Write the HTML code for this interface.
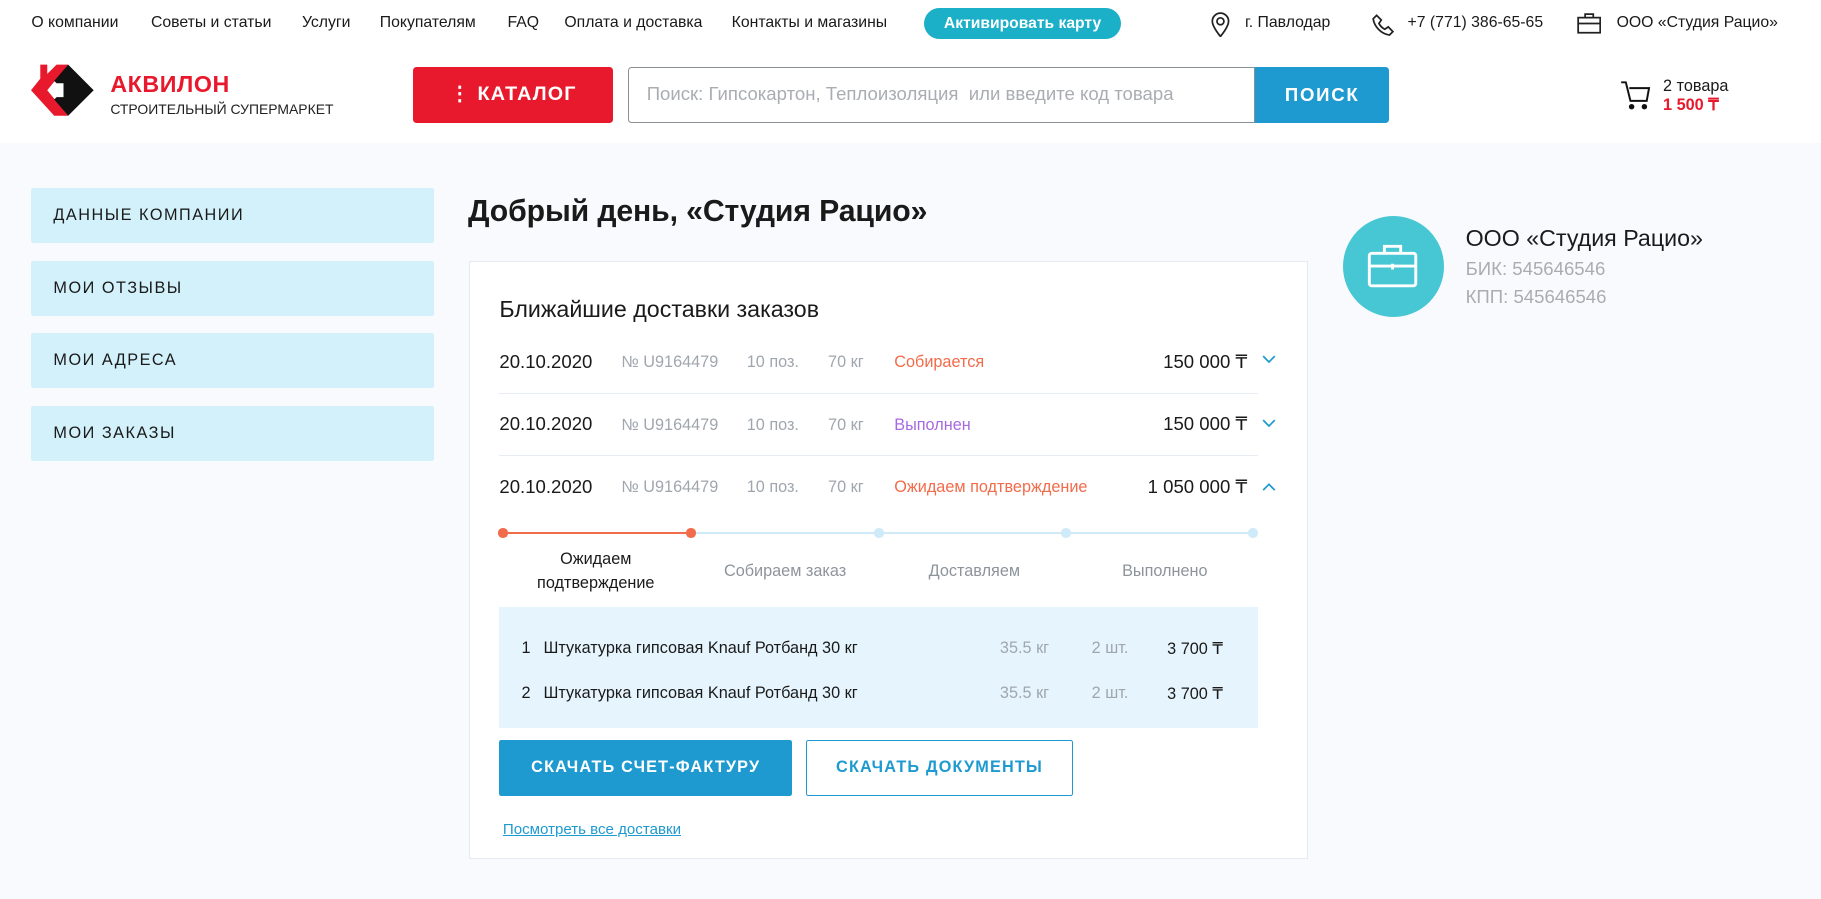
<!DOCTYPE html>
<html><head><meta charset="utf-8"><style>
html,body{margin:0;padding:0}
body{width:1821px;height:898px;overflow:hidden;background:#f8fafd;font-family:"Liberation Sans",sans-serif;color:#1a1a1a}
#w{zoom:1.16135;position:relative;width:1568px;height:774px}
.a{position:absolute;white-space:nowrap}
.hdr{position:absolute;left:0;top:0;width:1568px;height:123px;background:#fff}
.nav{font-size:13.6px;top:12px}
.side{position:absolute;left:27px;width:347px;height:47px;background:#d3f1fb;border-radius:2px;font-size:14px;letter-spacing:1.3px;line-height:47px;padding-left:19px;box-sizing:border-box}
.row{font-size:16px}
.g{color:#a0a6ad;font-size:14px}
.sep{position:absolute;left:430px;width:653px;height:1px;background:#e6ecf1}
.chev{position:absolute;left:1087px}
</style></head><body><div id="w">
<div class="hdr"></div>
<div class="a nav" style="left:27px">О компании</div>
<div class="a nav" style="left:130px">Советы и статьи</div>
<div class="a nav" style="left:260px">Услуги</div>
<div class="a nav" style="left:327px">Покупателям</div>
<div class="a nav" style="left:437px">FAQ</div>
<div class="a nav" style="left:486px">Оплата и доставка</div>
<div class="a nav" style="left:630px">Контакты и магазины</div>
<div class="a" style="left:796px;top:7px;width:169px;height:27px;border-radius:14px;background:#1bb0c8;color:#fff;font-size:13.5px;font-weight:bold;line-height:27px;text-align:center">Активировать карту</div>
<svg class="a" style="left:1042px;top:10px" width="18" height="22" viewBox="0 0 18 22" fill="none" stroke="#222" stroke-width="1.5"><path d="M9 21C9 21 2 13 2 8a7 7 0 0 1 14 0c0 5-7 13-7 13z"/><circle cx="9" cy="8" r="3"/></svg>
<div class="a nav" style="left:1072px">г. Павлодар</div>
<svg class="a" style="left:1181px;top:11px" width="20" height="20" viewBox="0 0 20 20" fill="none" stroke="#222" stroke-width="1.5"><path d="M4 2l4 4-2 3c1 2 3 4 5 5l3-2 4 4-3 3C8 18 2 12 1 5z"/></svg>
<div class="a nav" style="left:1212px">+7 (771) 386-65-65</div>
<svg class="a" style="left:1358px;top:11px" width="21" height="18" viewBox="0 0 21 18" fill="none" stroke="#222" stroke-width="1.5"><rect x="1" y="4" width="19" height="13"/><path d="M7 4V1h7v3M1 9h19"/></svg>
<div class="a nav" style="left:1392px">ООО «Студия Рацио»</div>

<svg class="a" style="left:27px;top:52px" width="60" height="50" viewBox="0 0 60 50"><path d="M8 4h6v8l8-8h10L14 26l18 22H20L0 26 8 16z" fill="#e8192c"/><path d="M32 4l22 22-22 22-12-14 8-8-8-8z" fill="#111"/><path d="M22 20h6v12h-6l4-6z" fill="#fff"/></svg>
<div class="a" style="left:95px;top:61px;font-size:20px;font-weight:bold;color:#e8192c;letter-spacing:0.5px">АКВИЛОН</div>
<div class="a" style="left:95px;top:87px;font-size:12px;color:#222">СТРОИТЕЛЬНЫЙ СУПЕРМАРКЕТ</div>
<div class="a" style="left:356px;top:58px;width:172px;height:48px;background:#e8192c;border-radius:3px;color:#fff;font-size:17px;font-weight:bold;letter-spacing:1px;line-height:48px;text-align:center">⋮ КАТАЛОГ</div>
<div class="a" style="left:541px;top:58px;width:540px;height:48px;border:1.5px solid #8a8f94;box-sizing:border-box;border-radius:3px 0 0 3px;font-size:16px;color:#a9adb2;line-height:45px;padding-left:15px">Поиск: Гипсокартон, Теплоизоляция &nbsp;или введите код товара</div>
<div class="a" style="left:1081px;top:58px;width:115px;height:48px;background:#1e9ad0;border-radius:0 3px 3px 0;color:#fff;font-size:16px;font-weight:bold;letter-spacing:1.5px;line-height:48px;text-align:center">ПОИСК</div>
<svg class="a" style="left:1395px;top:69px" width="28" height="27" viewBox="0 0 28 27" fill="none" stroke="#111" stroke-width="1.7"><path d="M1 2h4l4 16h14l2-11H8"/><circle cx="10" cy="23" r="1.5" fill="#111"/><circle cx="21" cy="23" r="1.5" fill="#111"/></svg>
<div class="a" style="left:1432px;top:66px;font-size:14px">2 товара</div>
<div class="a" style="left:1432px;top:82px;font-size:14px;font-weight:bold;color:#e8192c">1 500 ₸</div>

<div class="side" style="top:162px">ДАННЫЕ КОМПАНИИ</div>
<div class="side" style="top:225px">МОИ ОТЗЫВЫ</div>
<div class="side" style="top:287px">МОИ АДРЕСА</div>
<div class="side" style="top:350px">МОИ ЗАКАЗЫ</div>

<div class="a" style="left:403px;top:168px;font-size:26px;font-weight:bold;letter-spacing:-0.1px">Добрый день, «Студия Рацио»</div>
<div class="a" style="left:404px;top:225px;width:722px;height:515px;background:#fff;border:1px solid #e4eaf0;box-sizing:border-box"></div>
<div class="a" style="left:430px;top:255px;font-size:20px">Ближайшие доставки заказов</div>

<div class="a row" style="left:430px;top:302px">20.10.2020</div>
<div class="a g" style="left:535px;top:304px">№ U9164479</div><div class="a g" style="left:643px;top:304px">10 поз.</div><div class="a g" style="left:713px;top:304px">70 кг</div>
<div class="a" style="left:770px;top:304px;font-size:14px;color:#f26b4a">Собирается</div>
<div class="a row" style="right:494px;top:302px">150 000 ₸</div>
<svg class="chev" style="top:306px" width="12" height="8" viewBox="0 0 12 8" fill="none" stroke="#1e9ad0" stroke-width="1.5"><path d="M1 1l5 5 5-5"/></svg>
<div class="sep" style="top:338px"></div>
<div class="a row" style="left:430px;top:356px">20.10.2020</div>
<div class="a g" style="left:535px;top:358px">№ U9164479</div><div class="a g" style="left:643px;top:358px">10 поз.</div><div class="a g" style="left:713px;top:358px">70 кг</div>
<div class="a" style="left:770px;top:358px;font-size:14px;color:#a66ae0">Выполнен</div>
<div class="a row" style="right:494px;top:356px">150 000 ₸</div>
<svg class="chev" style="top:361px" width="12" height="8" viewBox="0 0 12 8" fill="none" stroke="#1e9ad0" stroke-width="1.5"><path d="M1 1l5 5 5-5"/></svg>
<div class="sep" style="top:392px"></div>
<div class="a row" style="left:430px;top:410px">20.10.2020</div>
<div class="a g" style="left:535px;top:412px">№ U9164479</div><div class="a g" style="left:643px;top:412px">10 поз.</div><div class="a g" style="left:713px;top:412px">70 кг</div>
<div class="a" style="left:770px;top:412px;font-size:14px;color:#f26b4a">Ожидаем подтверждение</div>
<div class="a row" style="right:494px;top:410px">1 050 000 ₸</div>
<svg class="chev" style="top:415px" width="12" height="8" viewBox="0 0 12 8" fill="none" stroke="#1e9ad0" stroke-width="1.5"><path d="M1 7l5-5 5 5"/></svg>

<div class="a" style="left:433px;top:458px;width:646px;height:2px;background:#cfeaf8"></div>
<div class="a" style="left:433px;top:458px;width:162px;height:2px;background:#f26b4a"></div>
<div class="a" style="left:429px;top:455px;width:8px;height:8px;border-radius:50%;background:#f26b4a"></div>
<div class="a" style="left:591px;top:455px;width:8px;height:8px;border-radius:50%;background:#f26b4a"></div>
<div class="a" style="left:753px;top:455px;width:8px;height:8px;border-radius:50%;background:#cfeaf8"></div>
<div class="a" style="left:914px;top:455px;width:8px;height:8px;border-radius:50%;background:#cfeaf8"></div>
<div class="a" style="left:1075px;top:455px;width:8px;height:8px;border-radius:50%;background:#cfeaf8"></div>
<div class="a" style="left:433px;top:471px;width:160px;text-align:center;font-size:14px;line-height:21px">Ожидаем<br>подтверждение</div>
<div class="a g" style="left:596px;top:484px;width:160px;text-align:center;color:#8d949b">Собираем заказ</div>
<div class="a g" style="left:759px;top:484px;width:160px;text-align:center;color:#8d949b">Доставляем</div>
<div class="a g" style="left:923px;top:484px;width:160px;text-align:center;color:#8d949b">Выполнено</div>

<div class="a" style="left:430px;top:523px;width:653px;height:104px;background:#e6f5fd"></div>
<div class="a" style="left:449px;top:550px;font-size:14px">1</div><div class="a" style="left:468px;top:550px;font-size:14px">Штукатурка гипсовая Knauf Ротбанд 30 кг</div>
<div class="a g" style="left:861px;top:550px">35.5 кг</div><div class="a g" style="left:940px;top:550px">2 шт.</div><div class="a" style="left:1005px;top:550px;font-size:14px">3 700 ₸</div>
<div class="a" style="left:449px;top:589px;font-size:14px">2</div><div class="a" style="left:468px;top:589px;font-size:14px">Штукатурка гипсовая Knauf Ротбанд 30 кг</div>
<div class="a g" style="left:861px;top:589px">35.5 кг</div><div class="a g" style="left:940px;top:589px">2 шт.</div><div class="a" style="left:1005px;top:589px;font-size:14px">3 700 ₸</div>

<div class="a" style="left:430px;top:637px;width:252px;height:48px;background:#1e9ad0;border-radius:2px;color:#fff;font-size:14px;font-weight:bold;letter-spacing:1px;line-height:48px;text-align:center">СКАЧАТЬ СЧЕТ-ФАКТУРУ</div>
<div class="a" style="left:694px;top:637px;width:230px;height:48px;border:1.5px solid #1e9ad0;box-sizing:border-box;border-radius:2px;color:#1e9ad0;font-size:14px;font-weight:bold;letter-spacing:1px;line-height:45px;text-align:center">СКАЧАТЬ ДОКУМЕНТЫ</div>
<div class="a" style="left:433px;top:707px;font-size:13px;color:#1e9ad0;text-decoration:underline">Посмотреть все доставки</div>

<div class="a" style="left:1156px;top:186px;width:87px;height:87px;border-radius:50%;background:#47c6d4"></div>
<svg class="a" style="left:1177px;top:210px" width="44" height="38" viewBox="0 0 44 38" fill="none" stroke="#fff" stroke-width="2.5"><rect x="2" y="8" width="40" height="28" rx="2"/><path d="M15 8V2h14v6M2 19h40M22 17v5"/></svg>
<div class="a" style="left:1262px;top:194px;font-size:20px">ООО «Студия Рацио»</div>
<div class="a" style="left:1262px;top:222px;font-size:16px;color:#a9adb2">БИК: 545646546</div>
<div class="a" style="left:1262px;top:246px;font-size:16px;color:#a9adb2">КПП: 545646546</div>
</div></body></html>
